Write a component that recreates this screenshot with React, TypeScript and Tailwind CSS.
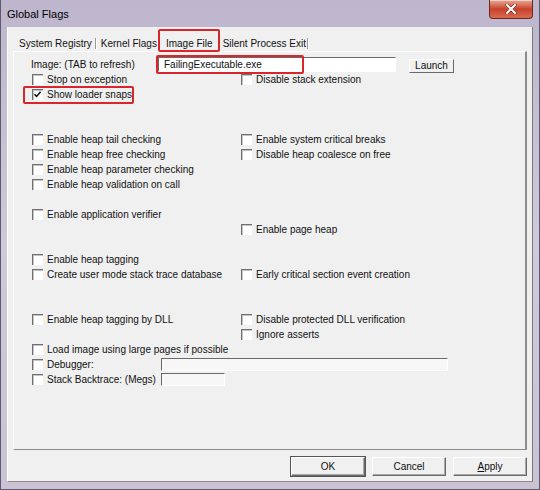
import React from 'react'

const FONT = { fontFamily: '"Liberation Sans", Arial, sans-serif' }

function Box({ checked }: { checked?: boolean }) {
  return (
    <span className="relative w-[11px] h-[11px] shrink-0 bg-white border-t border-l border-[#707070] shadow-[inset_1px_1px_0_#c4c4c4]">
      {checked && (
        <svg width="9" height="9" viewBox="0 0 9 9" className="absolute left-[0px] top-[0px]">
          <path d="M1.5 4.2 L3.6 6.4 L7.6 1.8" fill="none" stroke="#111" strokeWidth="1.6" />
        </svg>
      )}
    </span>
  )
}

function Check({ label, checked }: { label: string; checked?: boolean }) {
  return (
    <div className="flex items-center gap-[4px] h-[15px] whitespace-nowrap">
      <Box checked={checked} />
      <span>{label}</span>
    </div>
  )
}

function Row({ left, right }: { left?: React.ReactNode; right?: React.ReactNode }) {
  return (
    <div className="flex h-[15px]">
      <div className="w-[209px] shrink-0">{left}</div>
      <div>{right}</div>
    </div>
  )
}

function Edit({ className, children }: { className: string; children?: React.ReactNode }) {
  return (
    <div className={`border-t border-l border-[#6a6a6a] border-b border-r border-b-white border-r-white bg-[#f7f7f7] ${className}`}>
      {children}
    </div>
  )
}

function Btn({ children, def }: { children: React.ReactNode; def?: boolean }) {
  return (
    <div
      className={`w-[74px] h-[19px] flex items-center justify-center bg-[#f0f0f0] border border-t-white border-l-white border-r-[#6a6a6a] border-b-[#6a6a6a] shadow-[inset_-1px_-1px_0_#a8a8a8] ${def ? 'outline outline-1 outline-[#555]' : ''}`}
    >
      {children}
    </div>
  )
}

function Sep() {
  return <span className="w-[2px] h-[15px] border-l border-[#9a9a9a] border-r border-r-white self-end" />
}

export default function App() {
  return (
    <div style={FONT} className="w-[540px] h-[490px] flex flex-col bg-gradient-to-b from-[#bdb6cc] via-[#cfc9db] to-[#c9c3d5] border-l border-r border-b border-[#5f596c] text-[10px] text-[#111]">
      {/* Title bar */}
      <div className="h-[27px] flex items-start justify-between shrink-0">
        <span className="pl-[6px] mt-[8px] leading-[13px] text-[11px] text-black">Global Flags</span>
        <div className="mr-[6px] w-[44px] h-[19px] rounded-b-[4px] border border-t-0 border-[#6e2a20] bg-gradient-to-b from-[#e9a794] via-[#c7412b] to-[#d96a4f] flex items-center justify-center shadow-[inset_0_1px_0_rgba(255,255,255,0.5)]">
          <svg width="12" height="10" viewBox="0 0 12 10">
            <path d="M2 1 L10 9 M10 1 L2 9" stroke="#5a1a12" strokeWidth="3" strokeLinecap="round" />
            <path d="M2 1 L10 9 M10 1 L2 9" stroke="#fff" strokeWidth="2" strokeLinecap="round" />
          </svg>
        </div>
      </div>

      {/* Client */}
      <div className="mx-[6px] h-[455px] flex flex-col bg-[#f0f0f0] border-l border-white border-r border-r-[#7a7a7a] border-b border-b-[#8a8a8a]">
        {/* Tabs */}
        <div className="h-[24px] flex items-end pl-[11px] pb-[1px] leading-[12px]">
          <span>System Registry</span>
          <span className="ml-[3px]"><Sep /></span>
          <span className="ml-[4px]">Kernel Flags</span>
          <span className="relative ml-[1px] pl-[8px] pr-[7px]">
            Image File
            <span className="absolute left-0 right-0 top-[-9px] h-[23px] border-2 border-[#d8262c] rounded-[2px]" />
          </span>
          <span className="ml-[3px]">Silent Process Exit</span>
          <span className="ml-[1px]"><Sep /></span>
        </div>

        {/* Panel */}
        <div className="ml-[5px] mr-[5px] h-[399px] border-t border-l border-white border-r-2 border-b border-r-[#8c8c8c] border-b-[#8c8c8c] pt-[5px] pl-[18px] leading-[12px]">
          <div className="flex items-start h-[15px]">
            <div className="w-[127px] ml-[-1px] h-[15px] flex items-center">Image: (TAB to refresh)</div>
            <Edit className="relative w-[238px] h-[15px] bg-white flex items-center pl-[5px]">
              FailingExecutable.exe
              <span className="absolute left-[-3px] top-[-3px] w-[148px] h-[19px] border-2 border-[#d8262c] rounded-[2px]" />
            </Edit>
            <div className="ml-[13px] mt-[2px] w-[45px] h-[14px] flex items-center justify-center border border-t-white border-l-white border-r-[#6a6a6a] border-b-[#6a6a6a]">
              Launch
            </div>
          </div>
          <Row left={<Check label="Stop on exception" />} right={<Check label="Disable stack extension" />} />
          <Row
            left={
              <div className="relative">
                <Check label="Show loader snaps" checked />
                <span className="absolute left-[-9px] top-[-1px] w-[111px] h-[18px] border-2 border-[#d8262c] rounded-[2px]" />
              </div>
            }
          />
          <Row />
          <Row />
          <Row left={<Check label="Enable heap tail checking" />} right={<Check label="Enable system critical breaks" />} />
          <Row left={<Check label="Enable heap free checking" />} right={<Check label="Disable heap coalesce on free" />} />
          <Row left={<Check label="Enable heap parameter checking" />} />
          <Row left={<Check label="Enable heap validation on call" />} />
          <Row />
          <Row left={<Check label="Enable application verifier" />} />
          <Row right={<Check label="Enable page heap" />} />
          <Row />
          <Row left={<Check label="Enable heap tagging" />} />
          <Row left={<Check label="Create user mode stack trace database" />} right={<Check label="Early critical section event creation" />} />
          <Row />
          <Row />
          <Row left={<Check label="Enable heap tagging by DLL" />} right={<Check label="Disable protected DLL verification" />} />
          <Row right={<Check label="Ignore asserts" />} />
          <Row left={<Check label="Load image using large pages if possible" />} />
          <div className="flex items-center h-[15px]">
            <div className="w-[129px] shrink-0"><Check label="Debugger:" /></div>
            <Edit className="w-[287px] h-[13px]" />
          </div>
          <div className="flex items-center h-[15px]">
            <div className="w-[129px] shrink-0"><Check label="Stack Backtrace: (Megs)" /></div>
            <Edit className="w-[64px] h-[13px]" />
          </div>
        </div>

        {/* Buttons */}
        <div className="flex justify-end gap-[7px] pt-[7px] pr-[5px]">
          <Btn def>OK</Btn>
          <Btn>Cancel</Btn>
          <Btn>
            <span><span className="underline">A</span>pply</span>
          </Btn>
        </div>
      </div>
    </div>
  )
}
